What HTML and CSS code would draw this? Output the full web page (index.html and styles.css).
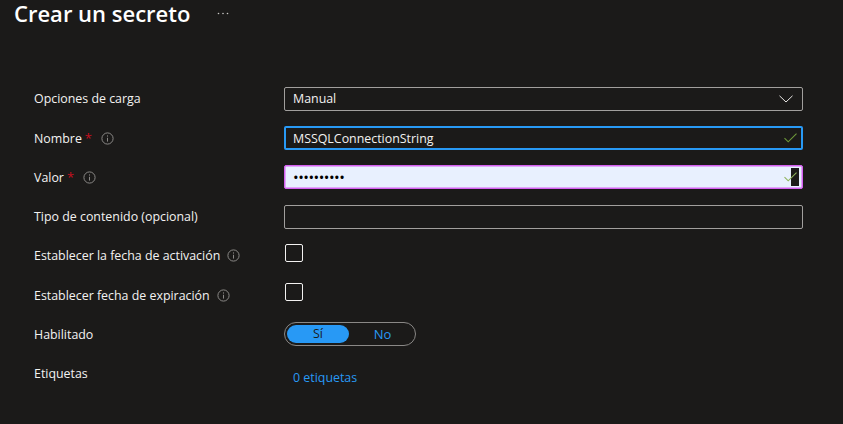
FILE: index.html
```html
<!DOCTYPE html>
<html lang="es">
<head>
<meta charset="utf-8">
<title>Crear un secreto</title>
<link rel="stylesheet" href="styles.css">
</head>
<body>
<header class="head">
  <h1 class="title">Crear un secreto</h1>
  <svg class="more" width="12" height="3" viewBox="0 0 12 3"><circle cx="1.5" cy="1.5" r=".8"/><circle cx="6" cy="1.5" r=".8"/><circle cx="10.5" cy="1.5" r=".8"/></svg>
</header>
<main class="form">
  <div class="row">
    <div class="label">Opciones de carga</div>
    <div class="field"><span>Manual</span>
      <svg class="chev" width="14" height="8" viewBox="0 0 14 8"><path d="M.5.8 7 7 13.5.8"/></svg></div>
  </div>
  <div class="row">
    <div class="label">Nombre<span class="req">*</span>
      <svg class="info" width="13" height="13" viewBox="0 0 13 13"><circle cx="6.5" cy="6.5" r="5.6"/><path d="M6.5 5.8v3.8M6.5 3.4v1.2"/></svg></div>
    <div class="field focus"><span>MSSQLConnectionString</span>
      <svg class="chk" width="13" height="10" viewBox="0 0 13 10"><path d="M.5 5.2 4.2 8.8 12.5.6"/></svg></div>
  </div>
  <div class="row">
    <div class="label">Valor<span class="req">*</span>
      <svg class="info" width="13" height="13" viewBox="0 0 13 13"><circle cx="6.5" cy="6.5" r="5.6"/><path d="M6.5 5.8v3.8M6.5 3.4v1.2"/></svg></div>
    <div class="field auto"><span class="dots">••••••••••</span>
      <svg class="chk" width="13" height="10" viewBox="0 0 13 10"><path d="M.5 5.2 4.2 8.8 12.5.6"/></svg>
      <i class="caret"></i></div>
  </div>
  <div class="row">
    <div class="label">Tipo de contenido (opcional)</div>
    <div class="field"></div>
  </div>
  <div class="row">
    <div class="label">Establecer la fecha de activación<svg class="info gap" width="13" height="13" viewBox="0 0 13 13"><circle cx="6.5" cy="6.5" r="5.6"/><path d="M6.5 5.8v3.8M6.5 3.4v1.2"/></svg></div>
    <div class="box"></div>
  </div>
  <div class="row">
    <div class="label">Establecer fecha de expiración<svg class="info gap" width="13" height="13" viewBox="0 0 13 13"><circle cx="6.5" cy="6.5" r="5.6"/><path d="M6.5 5.8v3.8M6.5 3.4v1.2"/></svg></div>
    <div class="box"></div>
  </div>
  <div class="row">
    <div class="label">Habilitado</div>
    <div class="toggle"><span class="opt on">Sí</span><span class="opt">No</span></div>
  </div>
  <div class="row">
    <div class="label">Etiquetas</div>
    <a class="tags">0 etiquetas</a>
  </div>
</main>
</body>
</html>
```
FILE: styles.css
```css
* { box-sizing: border-box; }
html, body { margin: 0; height: 100%; }
body {
  background: #1b1a19;
  color: #f3f2f1;
  font-family: "Open Sans", "Noto Sans", "Liberation Sans", sans-serif;
  font-size: 12.4px;
  overflow: hidden;
}
.head { display: flex; align-items: center; height: 27px; padding-left: 14px; }
.title { margin: 0; font-size: 22px; font-weight: 600; line-height: 27px; color: #fff; }
.more { margin-left: 27px; fill: #c8c6c4; }
.form { padding: 59.75px 40px 0 34px; }
.row { display: grid; grid-template-columns: 250px 519px; height: 39.25px; align-items: start; }
.label { display: flex; align-items: center; height: 24px; white-space: nowrap; }
.req { color: #c50f1f; margin-left: 3px; font-size: 13px; }
.info { margin-left: 9px; fill: none; stroke: #8a8886; stroke-width: 1; }
.info.gap { margin-left: 7px; }
.field {
  position: relative;
  display: flex; align-items: center; justify-content: space-between;
  height: 24px; padding: 0 8px;
  border: 1px solid #a19f9d; border-radius: 2px;
  color: #f3f2f1;
}
.chev { fill: none; stroke: #e8e6e4; stroke-width: 1; margin-right: 1px; }
.chk { position: relative; z-index: 1; fill: none; stroke: #6f9a3a; stroke-width: 1.1; margin-right: -3px; }
.focus { border: 2px solid #2899f5; padding: 0 7px; }
.auto { border: 1px solid #d45ff0; background: #e8f0fe; color: #000; box-shadow: inset 0 0 0 .5px #d45ff0; }
.auto .chk { stroke: #8fb45c; }
.dots { font-size: 15px; letter-spacing: -.5px; line-height: 20px; }
.caret { position: absolute; right: 3px; top: 2px; width: 8px; height: 18px; background: #1b1a19; }
.box { width: 18px; height: 18px; border: 1px solid #f3f2f1; border-radius: 2px; margin-left: 1px; }
.toggle {
  display: flex; align-items: center; gap: 3px;
  width: 132px; height: 24px; padding: 0 2px;
  border: 1px solid #8a8886; border-radius: 12px;
}
.opt { width: 62px; height: 18px; line-height: 18px; text-align: center; border-radius: 9px; color: #2899f5; font-size: 13px; }
.opt.on { background: #2899f5; color: #1b1a19; width: 63px; font-size: 12.4px; }
.tags { color: #2899f5; padding-left: 9px; line-height: 24px; margin-top: 4px; }
```
